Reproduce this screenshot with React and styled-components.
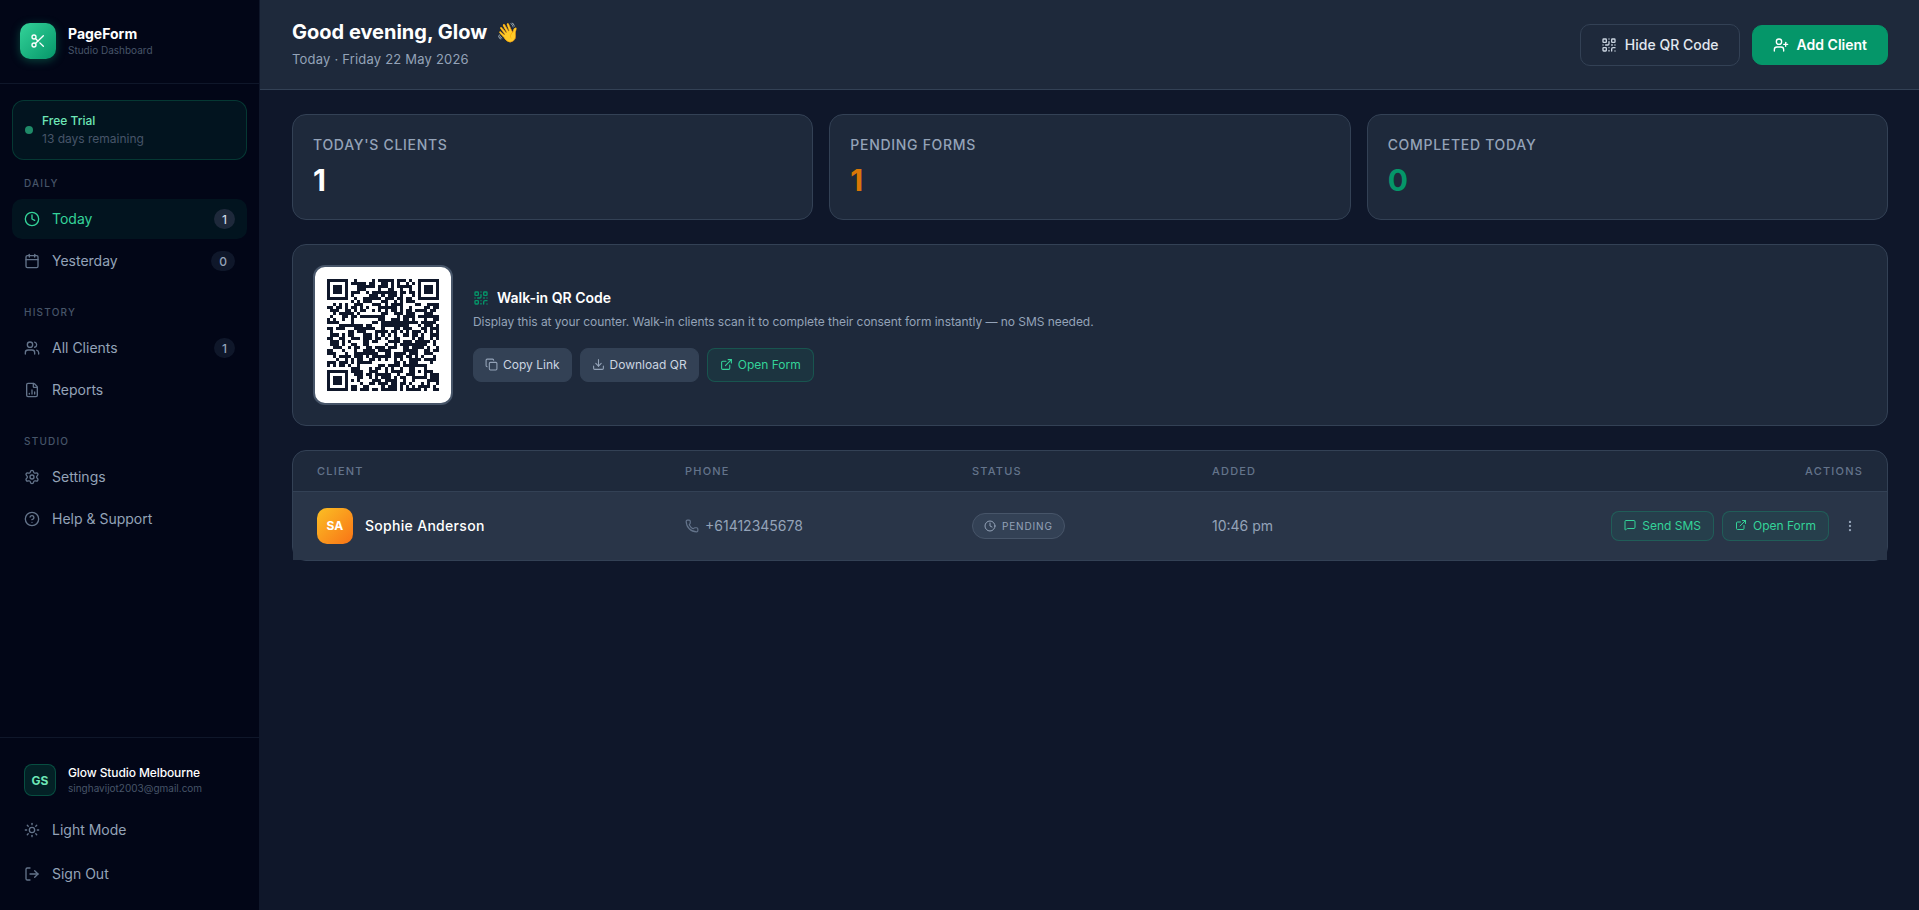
import React from 'react';
import styled, {createGlobalStyle, css} from 'styled-components';
import {
    Scissors, Clock, Calendar, Users, FileChartColumn, Settings, CircleHelp, Sun, LogOut,
    QrCode, UserPlus, Copy, Download, ExternalLink, Phone, MessageSquare, EllipsisVertical,
} from 'lucide-react';

const GlobalStyle = createGlobalStyle`
    html, body {
        margin: 0;
        padding: 0;
        height: 100%;
        background: #0f172a;
        font-family: Inter, "Noto Sans", sans-serif;
    }
    * {
        box-sizing: border-box;
    }
`

const Page = styled.div`
    display: flex;
    width: 100%;
    height: 910px;
    overflow: hidden;
    background: #0f172a;
`

const Sidebar = styled.aside`
    display: flex;
    flex-direction: column;
    flex: 0 0 260px;
    height: 100%;
    background: #020617;
    border-right: 1px solid #0f172a;
`

const Brand = styled.div`
    display: flex;
    align-items: center;
    gap: 12px;
    height: 84px;
    padding: 0 20px 2px;
    border-bottom: 1px solid #0f172a;

    .logo {
        display: flex;
        align-items: center;
        justify-content: center;
        width: 36px;
        height: 36px;
        border-radius: 10px;
        background: linear-gradient(135deg, #34d399, #059669);
        box-shadow: 0 2px 10px rgba(16, 185, 129, 0.35);
        color: #fff;
    }

    p {
        margin: 0;
        font-size: 14px;
        font-weight: 700;
        line-height: 18px;
        color: #fff;
    }

    p + p {
        font-size: 10px;
        font-weight: 400;
        line-height: 14px;
        color: #475569;
    }
`

const Trial = styled.div`
    display: flex;
    align-items: center;
    gap: 9px;
    margin: 16px 12px 0;
    height: 60px;
    padding: 0 12px;
    border: 1px solid rgba(16, 185, 129, 0.22);
    border-radius: 12px;
    background: rgba(16, 185, 129, 0.08);

    i {
        width: 8px;
        height: 8px;
        border-radius: 50%;
        background: #1f8a68;
    }

    p {
        margin: 0;
        font-size: 12px;
        font-weight: 500;
        line-height: 18px;
        color: #6ee7b7;
    }

    p + p {
        font-weight: 400;
        font-size: 12px;
        color: #475569;
    }
`

const SectionLabel = styled.div`
    margin-top: ${props => props.top}px;
    padding: 0 24px;
    font-size: 10px;
    font-weight: 500;
    line-height: 14px;
    letter-spacing: 1.2px;
    color: #475569;
`

const Nav = styled.nav`
    display: flex;
    flex-direction: column;
    gap: 2px;
    margin-top: 9px;
    padding: 0 12px;
`

const FooterNav = styled(Nav)`
    gap: 4px;
    margin-top: 0;
`

const NavItem = styled.div`
    display: flex;
    align-items: center;
    gap: 12px;
    height: 40px;
    padding: 0 12px;
    border-radius: 10px;
    font-size: 14px;
    font-weight: 400;
    color: #94a3b8;

    svg {
        flex: none;
        color: #64748b;
    }

    span {
        flex: 1;
        padding-bottom: 2px;
    }

    ${props => props.active && css`
        background: rgba(16, 185, 129, 0.08);
        color: #34d399;

        svg {
            color: #34d399;
        }
    `}
`

const Count = styled.b`
    display: flex;
    align-items: center;
    justify-content: center;
    height: 20px;
    padding: 0 8px;
    border-radius: 10px;
    background: ${props => props.active ? '#1e293b' : '#0f172a'};
    font-size: 12px;
    font-weight: 500;
    color: ${props => props.active ? '#cbd5e1' : '#94a3b8'};
`

const SideFooter = styled.div`
    margin-top: auto;
    padding-bottom: 16px;
    border-top: 1px solid #0f172a;
`

const Account = styled.div`
    display: flex;
    align-items: center;
    gap: 12px;
    padding: 26px 24px 14px;

    .initials {
        display: flex;
        align-items: center;
        justify-content: center;
        width: 32px;
        height: 32px;
        border: 1px solid rgba(16, 185, 129, 0.3);
        border-radius: 8px;
        background: rgba(16, 185, 129, 0.15);
        font-size: 12px;
        font-weight: 700;
        color: #6ee7b7;
    }

    p {
        margin: 0;
        font-size: 12px;
        font-weight: 500;
        line-height: 16px;
        letter-spacing: -0.1px;
        color: #fff;
    }

    p + p {
        font-size: 10px;
        font-weight: 400;
        line-height: 14px;
        letter-spacing: 0;
        color: #475569;
    }
`

const Main = styled.main`
    display: flex;
    flex-direction: column;
    flex: 1;
    min-width: 0;
`

const Topbar = styled.header`
    display: flex;
    align-items: center;
    justify-content: space-between;
    height: 90px;
    padding: 0 31px 0 32px;
    border-bottom: 1px solid #334155;
    background: #1e293b;

    h1 {
        margin: 0;
        font-size: 20px;
        font-weight: 700;
        line-height: 28px;
        color: #fff;

        span {
            margin-left: 4px;
            font-size: 19px;
        }
    }

    p {
        margin: 2px 0 2px;
        font-size: 13px;
        line-height: 20px;
        letter-spacing: 0.2px;
        color: #94a3b8;
    }

    .buttons {
        display: flex;
        align-items: center;
        gap: 12px;
    }
`

const HeadButton = styled.button`
    display: flex;
    align-items: center;
    gap: 8px;
    height: ${props => props.primary ? 40 : 42}px;
    padding: 0 20px;
    border: 1px solid ${props => props.primary ? '#059669' : '#334155'};
    border-radius: 10px;
    background: ${props => props.primary ? '#059669' : 'transparent'};
    font-family: inherit;
    font-size: 14px;
    font-weight: ${props => props.primary ? 600 : 500};
    color: ${props => props.primary ? '#fff' : '#e2e8f0'};

    svg {
        color: ${props => props.primary ? '#fff' : '#cbd5e1'};
    }
`

const Content = styled.div`
    display: flex;
    flex-direction: column;
    gap: 24px;
    padding: 24px 31px 24px 32px;
`

const Stats = styled.div`
    display: grid;
    grid-template-columns: repeat(3, 1fr);
    gap: 16px;
`

const StatCard = styled.div`
    height: 106px;
    padding: 21px 20px;
    border: 1px solid #334155;
    border-radius: 14px;
    background: #1e293b;

    p {
        margin: 0;
        font-size: 14px;
        font-weight: 500;
        line-height: 18px;
        letter-spacing: 0.7px;
        text-transform: uppercase;
        color: #94a3b8;
    }

    strong {
        display: block;
        margin-top: 8px;
        font-size: 30px;
        font-weight: 700;
        line-height: 36px;
        color: ${props => props.color};
    }
`

const QrPanel = styled.section`
    display: flex;
    align-items: center;
    gap: 20px;
    height: 182px;
    padding: 0 20px;
    border: 1px solid #334155;
    border-radius: 14px;
    background: #1e293b;
`

const QrBox = styled.div`
    display: flex;
    align-items: center;
    justify-content: center;
    flex: none;
    width: 140px;
    height: 140px;
    border: 2px solid #475569;
    border-radius: 12px;
    background: #fff;
`

const QrInfo = styled.div`
    h2 {
        display: flex;
        align-items: center;
        gap: 8px;
        margin: -1px 0 0;
        font-size: 14px;
        font-weight: 600;
        line-height: 20px;
        color: #fff;

        svg {
            color: #059669;
        }
    }

    p {
        margin: 5px 0 1px;
        font-size: 12px;
        line-height: 18px;
        letter-spacing: -0.045px;
        color: #94a3b8;
    }

    .actions {
        display: flex;
        gap: 8px;
        margin-top: 17px;
    }
`

const SmallButton = styled.button`
    display: flex;
    align-items: center;
    gap: ${props => props.gap || 5}px;
    height: ${props => props.h || 34}px;
    padding: 0 ${props => props.pad || 11}px 1px;
    border: 1px solid ${props => props.green ? 'rgba(16, 185, 129, 0.25)' : '#334155'};
    border-radius: 8px;
    background: ${props => props.green ? 'rgba(16, 185, 129, 0.08)' : '#334155'};
    font-family: inherit;
    font-size: 12px;
    font-weight: 400;
    color: ${props => props.green ? '#34d399' : '#cbd5e1'};

    svg {
        color: ${props => props.green ? '#34d399' : '#94a3b8'};
    }
`

const Table = styled.section`
    border: 1px solid #334155;
    border-radius: 14px;
    background: #1e293b;
`

const Cols = styled.div`
    display: grid;
    grid-template-columns: 368px 287px 240px 1fr auto;
    align-items: center;
    padding: 0 24px;
`

const TableHead = styled(Cols)`
    height: 41px;
    border-bottom: 1px solid #334155;
    font-size: 11px;
    font-weight: 500;
    letter-spacing: 1.2px;
    color: #64748b;
`

const TableRow = styled(Cols)`
    height: 68px;
    padding-bottom: 1px;
    background: #293548;
`

const ClientCell = styled.div`
    display: flex;
    align-items: center;
    gap: 12px;
    font-size: 14px;
    font-weight: 500;
    letter-spacing: 0.3px;
    color: #fff;

    .avatar {
        display: flex;
        align-items: center;
        justify-content: center;
        width: 36px;
        height: 36px;
        border-radius: 10px;
        background: linear-gradient(135deg, #fbbf24, #f97316);
        font-size: 12px;
        font-weight: 700;
        color: #fff;
    }
`

const PhoneCell = styled.div`
    display: flex;
    align-items: center;
    gap: 6px;
    font-size: 14px;
    color: #94a3b8;

    svg {
        color: #64748b;
    }
`

const Pill = styled.span`
    display: inline-flex;
    align-items: center;
    gap: 6px;
    height: 26px;
    padding: 0 11px;
    border: 1px solid #475569;
    border-radius: 13px;
    background: #334155;
    font-size: 10px;
    font-weight: 400;
    letter-spacing: 0.85px;
    color: #94a3b8;
`

const Added = styled.div`
    font-size: 14px;
    color: #94a3b8;
`

const RowActions = styled.div`
    display: flex;
    align-items: center;
    justify-content: flex-end;
    gap: 8px;

    .more {
        display: flex;
        align-items: center;
        justify-content: center;
        width: 26px;
        color: #94a3b8;
    }
`

// deterministic filler for the data modules, the fixed squares are drawn apart
const QR_SIZE = 37

function isFixed(x, y) {
    return (x < 8 && y < 8)
        || (x >= QR_SIZE - 8 && y < 8)
        || (x < 8 && y >= QR_SIZE - 8)
        || (x >= 28 && x <= 32 && y >= 28 && y <= 32)
}

function qrCells() {
    const cells = []
    let seed = 20260522
    for (let y = 0; y < QR_SIZE; y++) {
        for (let x = 0; x < QR_SIZE; x++) {
            seed = (seed * 1664525 + 1013904223) >>> 0
            if (!isFixed(x, y) && (seed >>> 24) % 100 < 50) cells.push([x, y])
        }
    }
    return cells
}

function Finder({x, y}) {
    return (
        <g fill="#0f172a">
            <path fillRule="evenodd" d={`M${x} ${y}h7v7h-7zM${x + 1} ${y + 1}v5h5v-5z`} />
            <rect x={x + 2} y={y + 2} width="3" height="3" />
        </g>
    )
}

function QrImage() {
    return (
        <svg width="112" height="112" viewBox={`0 0 ${QR_SIZE} ${QR_SIZE}`} shapeRendering="crispEdges">
            <g fill="#0f172a">
                {qrCells().map(([x, y]) => <rect key={`${x}-${y}`} x={x} y={y} width="1" height="1" />)}
                <path fillRule="evenodd" d="M28 28h5v5h-5zM29 29v3h3v-3z" />
                <rect x="30" y="30" width="1" height="1" />
            </g>
            <Finder x={0} y={0} />
            <Finder x={QR_SIZE - 7} y={0} />
            <Finder x={0} y={QR_SIZE - 7} />
        </svg>
    )
}

export default function App() {
    return (
        <Page>
            <GlobalStyle />
            <Sidebar>
                <Brand>
                    <div className="logo"><Scissors size={16} /></div>
                    <div>
                        <p>PageForm</p>
                        <p>Studio Dashboard</p>
                    </div>
                </Brand>
                <Trial>
                    <i />
                    <div>
                        <p>Free Trial</p>
                        <p>13 days remaining</p>
                    </div>
                </Trial>
                <SectionLabel top={16}>DAILY</SectionLabel>
                <Nav>
                    <NavItem active><Clock size={16} /><span>Today</span><Count active>1</Count></NavItem>
                    <NavItem><Calendar size={16} /><span>Yesterday</span><Count>0</Count></NavItem>
                </Nav>
                <SectionLabel top={24}>HISTORY</SectionLabel>
                <Nav>
                    <NavItem><Users size={16} /><span>All Clients</span><Count>1</Count></NavItem>
                    <NavItem><FileChartColumn size={16} /><span>Reports</span></NavItem>
                </Nav>
                <SectionLabel top={24}>STUDIO</SectionLabel>
                <Nav>
                    <NavItem><Settings size={16} /><span>Settings</span></NavItem>
                    <NavItem><CircleHelp size={16} /><span>Help &amp; Support</span></NavItem>
                </Nav>
                <SideFooter>
                    <Account>
                        <div className="initials">GS</div>
                        <div>
                            <p>Glow Studio Melbourne</p>
                            <p>singhavijot2003@gmail.com</p>
                        </div>
                    </Account>
                    <FooterNav>
                        <NavItem><Sun size={16} /><span>Light Mode</span></NavItem>
                        <NavItem><LogOut size={16} /><span>Sign Out</span></NavItem>
                    </FooterNav>
                </SideFooter>
            </Sidebar>
            <Main>
                <Topbar>
                    <div>
                        <h1>Good evening, Glow <span>👋</span></h1>
                        <p>Today · Friday 22 May 2026</p>
                    </div>
                    <div className="buttons">
                        <HeadButton><QrCode size={16} />Hide QR Code</HeadButton>
                        <HeadButton primary><UserPlus size={16} />Add Client</HeadButton>
                    </div>
                </Topbar>
                <Content>
                    <Stats>
                        <StatCard color="#fff"><p>Today's Clients</p><strong>1</strong></StatCard>
                        <StatCard color="#d97706"><p>Pending Forms</p><strong>1</strong></StatCard>
                        <StatCard color="#059669"><p>Completed Today</p><strong>0</strong></StatCard>
                    </Stats>
                    <QrPanel>
                        <QrBox><QrImage /></QrBox>
                        <QrInfo>
                            <h2><QrCode size={16} />Walk-in QR Code</h2>
                            <p>Display this at your counter. Walk-in clients scan it to complete their consent form instantly — no SMS needed.</p>
                            <div className="actions">
                                <SmallButton><Copy size={13} />Copy Link</SmallButton>
                                <SmallButton><Download size={13} />Download QR</SmallButton>
                                <SmallButton green pad={12}><ExternalLink size={13} />Open Form</SmallButton>
                            </div>
                        </QrInfo>
                    </QrPanel>
                    <Table>
                        <TableHead>
                            <div>CLIENT</div>
                            <div>PHONE</div>
                            <div>STATUS</div>
                            <div>ADDED</div>
                            <div>ACTIONS</div>
                        </TableHead>
                        <TableRow>
                            <ClientCell><div className="avatar">SA</div>Sophie Anderson</ClientCell>
                            <PhoneCell><Phone size={14} />+61412345678</PhoneCell>
                            <div><Pill><Clock size={12} />PENDING</Pill></div>
                            <Added>10:46 pm</Added>
                            <RowActions>
                                <SmallButton green h={30} pad={12} gap={6}><MessageSquare size={12} />Send SMS</SmallButton>
                                <SmallButton green h={30} pad={12} gap={6}><ExternalLink size={12} />Open Form</SmallButton>
                                <div className="more"><EllipsisVertical size={14} /></div>
                            </RowActions>
                        </TableRow>
                    </Table>
                </Content>
            </Main>
        </Page>
    )
}
